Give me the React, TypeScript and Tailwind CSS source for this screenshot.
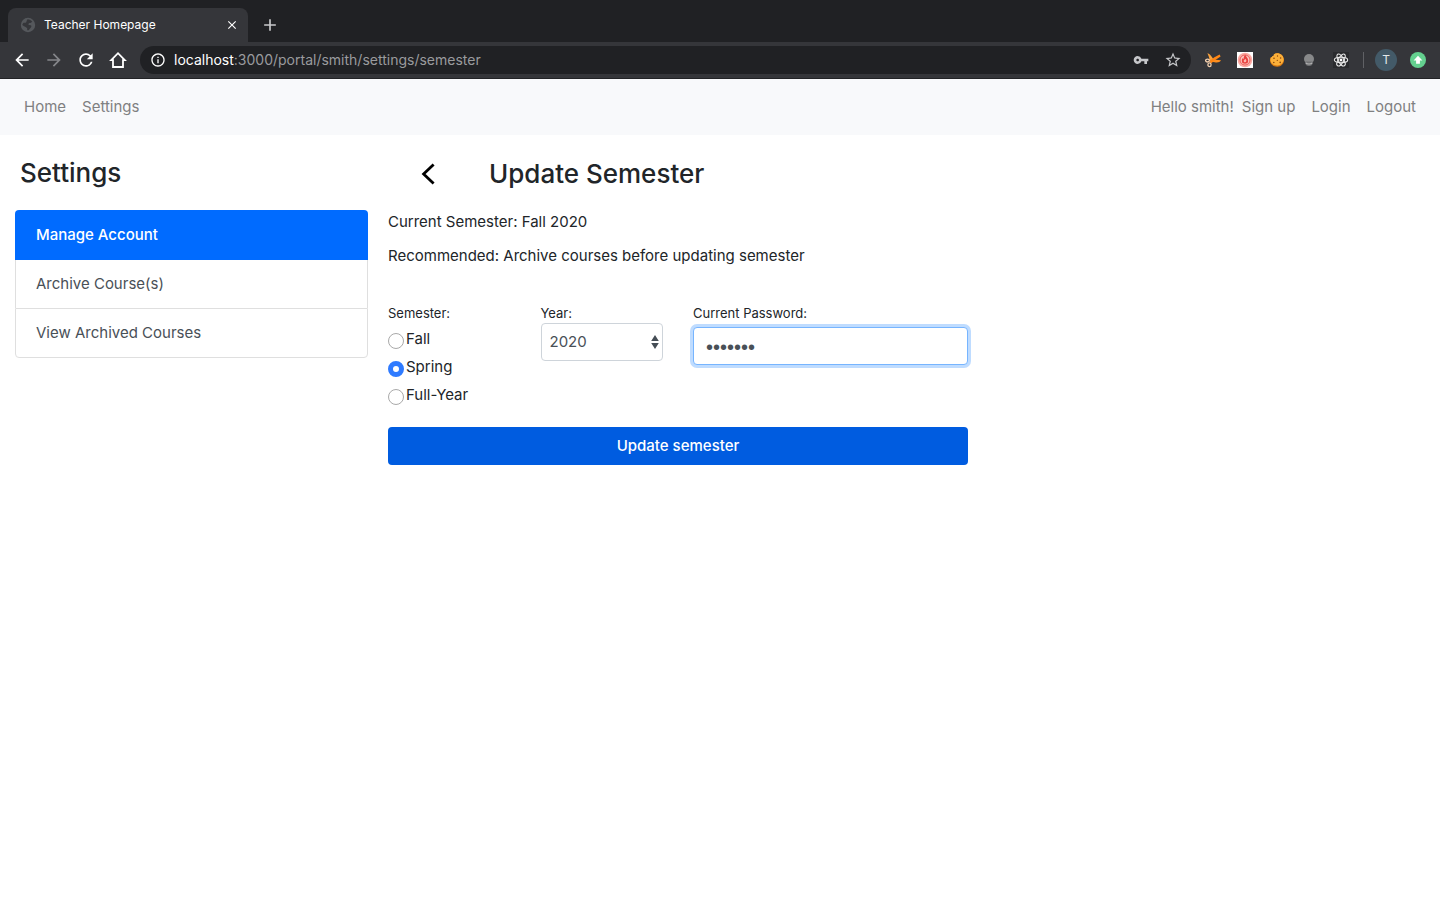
import { useState } from "react";
import type { ReactNode } from "react";
import { MdArrowBack, MdArrowForward, MdRefresh, MdInfoOutline, MdVpnKey, MdStarBorder, MdClose, MdAdd } from "react-icons/md";

function HomeIcon() {
  return (
    <svg viewBox="0 0 18 18" className="size-[18px]" fill="none" stroke="currentColor" strokeWidth="1.800">
      <path d="M2.200 9.100H4V16h10V9.100h1.800L9 2.200z" />
    </svg>
  );
}

function GlobeIcon() {
  return (
    <svg viewBox="0 0 16 16" className="size-4 shrink-0">
      <circle cx="8" cy="8" r="7.2" fill="#55585c" />
      <path d="M7.500 2.200c2 0 3.800 1 4.800 2.600-1 .2-1 1.200-1.900 1.200-1.300 0-1.900.5-1.900 1.400 0 .8 1.500.4 2.400.9.8.5.6 1.700-.2 2.500-1 .9-1.300 2.300-2.700 2.800-.7-.3-1-.9-.8-1.800.1-.7-.3-1-1-1.300-.9-.4-1.300-1-2.200-1.200L2.300 8c.2-1 .6-1.600 1.200-2.300.7.200 1.800.3 2.500-.2.800-.5.300-1.300.8-2z" fill="#35363a" />
    </svg>
  );
}

function ScissorsIcon() {
  return (
    <svg viewBox="0 0 16 16" className="size-4">
      <path d="M2.400 1.200C4.200 1.400 6 3.600 8 6.400L7 9.600 4.400 8C4.600 5.600 3.400 3.600 2.400 1.200z" fill="#f9a23c" />
      <path d="M4 7.600 8 7.400 16 8.200C15 10.200 12.400 10.800 9.800 10.200L6.400 9.800z" fill="#ff8f1f" />
      <path d="M14.600 2.600 9 5.600 4.400 9.400 6 11.400 9.600 8.600 15.600 4.400z" fill="#ff8614" />
      <ellipse cx="2.500" cy="8.600" rx="1.900" ry="1.400" fill="none" stroke="#f3cfae" strokeWidth="1.300" />
      <ellipse cx="4.500" cy="12.800" rx="1.600" ry="1.900" fill="none" stroke="#f3cfae" strokeWidth="1.300" />
    </svg>
  );
}

function FlameIcon() {
  return (
    <svg viewBox="0 0 16 16" className="size-4">
      <path d="M0 0h16v16H0z" fill="#fff" />
      <circle cx="8" cy="8" r="7.300" fill="#fba9a2" />
      <circle cx="8" cy="8" r="5" fill="#fdc9c2" stroke="#ee5c58" strokeWidth="1" />
      <path d="M8.300 2.800c.3 1.800 2.900 2.900 2.900 5.700A3.200 3.200 0 0 1 8 11.800a3.200 3.200 0 0 1-3.200-3.300c0-1 .5-1.900 1-2.400.1.700.4 1 .8 1.200-.1-1.700.4-3.500 1.700-4.500z" fill="#e9413f" />
      <path d="M8.100 6.800c1 .8 1.500 1.500 1.200 2.500-.2.700-.7 1-1.300 1-.7 0-1.300-.5-1.300-1.300 0-.9 1-1.200 1.400-2.200z" fill="#fdb6ad" />
    </svg>
  );
}

function CookieIcon() {
  return (
    <svg viewBox="0 0 16 16" className="size-4">
      <path d="M8 1.200c3.500-.2 6.700 2.300 7 6.300.3 4-2.800 7.200-6.700 7.300C4.300 14.900 1.100 12 1 8.300c0-1.300.3-2.200.8-3.100 1 .3 1.600-.3 1.500-1.300 1 .2 1.600-.3 1.500-1.500C5.800 1.600 6.900 1.200 8 1.200z" fill="#d9780f" />
      <path d="M8 1.200c3.300-.1 6.300 2.200 6.600 5.700.3 3.600-2.700 6.300-6.200 6.500-3.600.1-6.600-2-7-5.200 0-1.100.1-2.200.6-3 1 .3 1.400-.5 1.300-1.300 1 .2 1.600-.3 1.500-1.500C5.800 1.600 6.900 1.200 8 1.200z" fill="#fbb03a" />
      <g fill="#8a480e">
        <circle cx="8.500" cy="4" r=".7" />
        <circle cx="5" cy="6.300" r=".8" />
        <circle cx="11.600" cy="6" r=".8" />
        <circle cx="8.300" cy="8.400" r=".6" />
        <circle cx="4.800" cy="10.500" r=".8" />
        <circle cx="11.200" cy="10.400" r=".8" />
      </g>
    </svg>
  );
}

function BulbIcon() {
  return (
    <svg viewBox="0 0 16 16" className="size-4">
      <circle cx="8" cy="7" r="5" fill="#88898a" />
      <path d="M4.400 9.600h7.200v1.400A3.600 3 0 0 1 8 14a3.600 3 0 0 1-3.600-3z" fill="#6f7072" />
      <path d="M4.800 11c1.600 1.300 4.800 1.300 6.400 0" fill="none" stroke="#b2b2b3" strokeWidth="1.200" />
    </svg>
  );
}

function ReactIcon() {
  return (
    <svg viewBox="0 0 16 16" className="size-4">
      <path d="M0 0h16v16H0z" fill="#2a2b2e" />
      <g fill="none" stroke="#e8e8e8" strokeWidth="1.100">
        <ellipse cx="8" cy="8" rx="6.700" ry="2.700" />
        <ellipse cx="8" cy="8" rx="6.700" ry="2.700" transform="rotate(60 8 8)" />
        <ellipse cx="8" cy="8" rx="6.700" ry="2.700" transform="rotate(120 8 8)" />
      </g>
      <circle cx="8" cy="8" r="1.400" fill="#fff" />
    </svg>
  );
}

function UpdateIcon() {
  return (
    <svg viewBox="0 0 16 16" className="size-4">
      <circle cx="8" cy="8" r="8" fill="#64d08f" />
      <path d="M8 3.800 12.400 8.400H9.900v3.400H6.100V8.400H3.600z" fill="#fff" />
    </svg>
  );
}

function IconButton({ label, children, className = "" }: { label: string; children: ReactNode; className?: string }) {
  return (
    <button type="button" aria-label={label} className={`flex size-5 shrink-0 items-center justify-center ${className}`}>
      {children}
    </button>
  );
}

function BrowserChrome() {
  return (
    <header className="bg-[#202124] text-white">
      <div className="flex h-[42px] items-end pl-2">
        <div className="flex h-[34px] w-60 items-center gap-2 rounded-t-lg bg-[#35363a] px-3">
          <GlobeIcon />
          <span className="flex-1 text-xs">Teacher Homepage</span>
          <button type="button" aria-label="Close tab" className="flex w-2 justify-center">
            <MdClose className="size-[14px] shrink-0" />
          </button>
        </div>
        <div className="flex h-[34px] items-center pl-3 text-[#c8c9cb]">
          <IconButton label="New tab">
            <MdAdd className="size-5" />
          </IconButton>
        </div>
      </div>
      <div className="flex h-[37px] items-center gap-3 border-b border-[#222326] bg-[#35363a] px-3">
        <IconButton label="Back"><MdArrowBack className="size-5" /></IconButton>
        <IconButton label="Forward" className="text-[#85868a]"><MdArrowForward className="size-5" /></IconButton>
        <IconButton label="Reload"><MdRefresh className="size-5" /></IconButton>
        <IconButton label="Home page"><HomeIcon /></IconButton>
        <div className="flex h-7 flex-1 items-center gap-2 rounded-full bg-[#202124] pr-2 pl-[10px]">
          <MdInfoOutline className="size-4 shrink-0" />
          <div className="flex-1 text-sm text-[#9a9b9e]">
            <span className="text-white">localhost</span>:3000/portal/smith/settings/semester
          </div>
          <div className="flex gap-3 text-[#c6c7ca]">
            <IconButton label="Saved password"><MdVpnKey className="size-4" /></IconButton>
            <IconButton label="Bookmark"><MdStarBorder className="size-[18px]" /></IconButton>
          </div>
        </div>
        <IconButton label="Screenshot extension"><ScissorsIcon /></IconButton>
        <IconButton label="Flame extension"><FlameIcon /></IconButton>
        <IconButton label="Cookie extension"><CookieIcon /></IconButton>
        <IconButton label="Bulb extension"><BulbIcon /></IconButton>
        <IconButton label="React extension"><ReactIcon /></IconButton>
        <span className="h-4 w-px bg-[#606165]" />
        <button type="button" aria-label="Profile" className="-mx-px flex size-[22px] items-center justify-center rounded-full bg-[#435a68] text-xs text-[#e4e8ea]">
          T
        </button>
        <IconButton label="Update browser"><UpdateIcon /></IconButton>
      </div>
    </header>
  );
}

function Navbar() {
  return (
    <nav className="flex h-14 items-center justify-between bg-[#f8f9fb] px-6 text-[#7f8081]">
      <div className="flex gap-4">
        <a href="#home">Home</a>
        <a href="#settings">Settings</a>
      </div>
      <div className="flex gap-4">
        <div className="flex gap-2">
          <span>Hello smith!</span>
          <a href="#signup">Sign up</a>
        </div>
        <a href="#login">Login</a>
        <a href="#logout">Logout</a>
      </div>
    </nav>
  );
}

function Sidebar() {
  return (
    <aside>
      <h1 className="px-[5px] text-[26px] leading-[34px] font-medium">Settings</h1>
      <ul className="mt-5 text-[#495057]">
        <li>
          <a href="#account" className="block rounded-t bg-[#006bff] px-[21px] py-[13px] font-medium text-white">Manage Account</a>
        </li>
        <li>
          <a href="#archive" className="block border-x border-[#dfdfdf] px-5 py-3">Archive Course(s)</a>
        </li>
        <li>
          <a href="#archived" className="block rounded-b border border-[#dfdfdf] px-5 py-3">View Archived Courses</a>
        </li>
      </ul>
    </aside>
  );
}

const semesters = ["Fall", "Spring", "Full-Year"];

function SemesterForm() {
  const [semester, setSemester] = useState("Spring");
  const [year, setYear] = useState("2020");
  const [password, setPassword] = useState("teacher");
  return (
    <form className="mt-[35px]" onSubmit={(e) => e.preventDefault()}>
      <div className="grid grid-cols-4 gap-x-[30px]">
        <fieldset>
          <legend className="text-[13px] leading-5">Semester:</legend>
          <div className="pt-[2px]">
            {semesters.map((name) => (
              <label key={name} className="flex h-7 items-center gap-[2px]">
                <input
                  type="radio"
                  name="semester"
                  value={name}
                  checked={semester === name}
                  onChange={() => setSemester(name)}
                  className="mt-[3px] size-4 shrink-0 appearance-none rounded-full border border-[#a9a9a9] bg-white checked:border-[5px] checked:border-[#2f7bff]"
                />
                {name}
              </label>
            ))}
          </div>
        </fieldset>
        <div>
          <label htmlFor="year" className="block text-[13px] leading-5">Year:</label>
          <div className="relative">
            <select
              id="year"
              value={year}
              onChange={(e) => setYear(e.target.value)}
              className="h-[38px] w-full appearance-none rounded border border-[#ced4da] bg-white px-2 text-[#495057]"
            >
              <option>2020</option>
              <option>2021</option>
            </select>
            <svg viewBox="0 0 8 14" className="pointer-events-none absolute top-3 right-1 h-[14px] w-2" fill="#454d55">
              <path d="M4 0 7.800 6H.2zM4 14 .2 8h7.600z" />
            </svg>
          </div>
        </div>
        <div className="col-span-2">
          <label htmlFor="password" className="block text-[13px] leading-5">Current Password:</label>
          <input
            id="password"
            type="password"
            value={password}
            onChange={(e) => setPassword(e.target.value)}
            className="mt-1 h-[38px] w-full rounded border border-[#77b5ff] bg-white px-3 pt-[2px] font-['Liberation_Sans',sans-serif] text-xl text-[#495057] ring-3 ring-[#bfdcff] outline-none"
          />
        </div>
      </div>
      <button type="submit" className="mt-[18px] h-[38px] w-full rounded bg-[#005ce0] font-medium text-white">
        Update semester
      </button>
    </form>
  );
}

export default function App() {
  return (
    <div className="min-h-screen bg-white font-['Inter',sans-serif] text-[15px] leading-6 text-[#212529]">
      <BrowserChrome />
      <Navbar />
      <main className="grid grid-cols-[353fr_580fr_437fr] gap-x-5 px-[15px] pt-[21px]">
        <Sidebar />
        <section>
          <div className="flex items-center">
            <div className="flex w-[101px] pl-[33px]">
              <button type="button" aria-label="Go back">
                <svg viewBox="0 0 14 22" className="h-[22px] w-[14px]" fill="none" stroke="#000" strokeWidth="2.800">
                  <path d="M12.600 1.400 2.600 11l10 9.600" />
                </svg>
              </button>
            </div>
            <h2 className="text-[26px] leading-9 font-medium">Update Semester</h2>
          </div>
          <p className="mt-[18px]">Current Semester: Fall 2020</p>
          <p className="mt-[10px]">Recommended: Archive courses before updating semester</p>
          <SemesterForm />
        </section>
      </main>
    </div>
  );
}
